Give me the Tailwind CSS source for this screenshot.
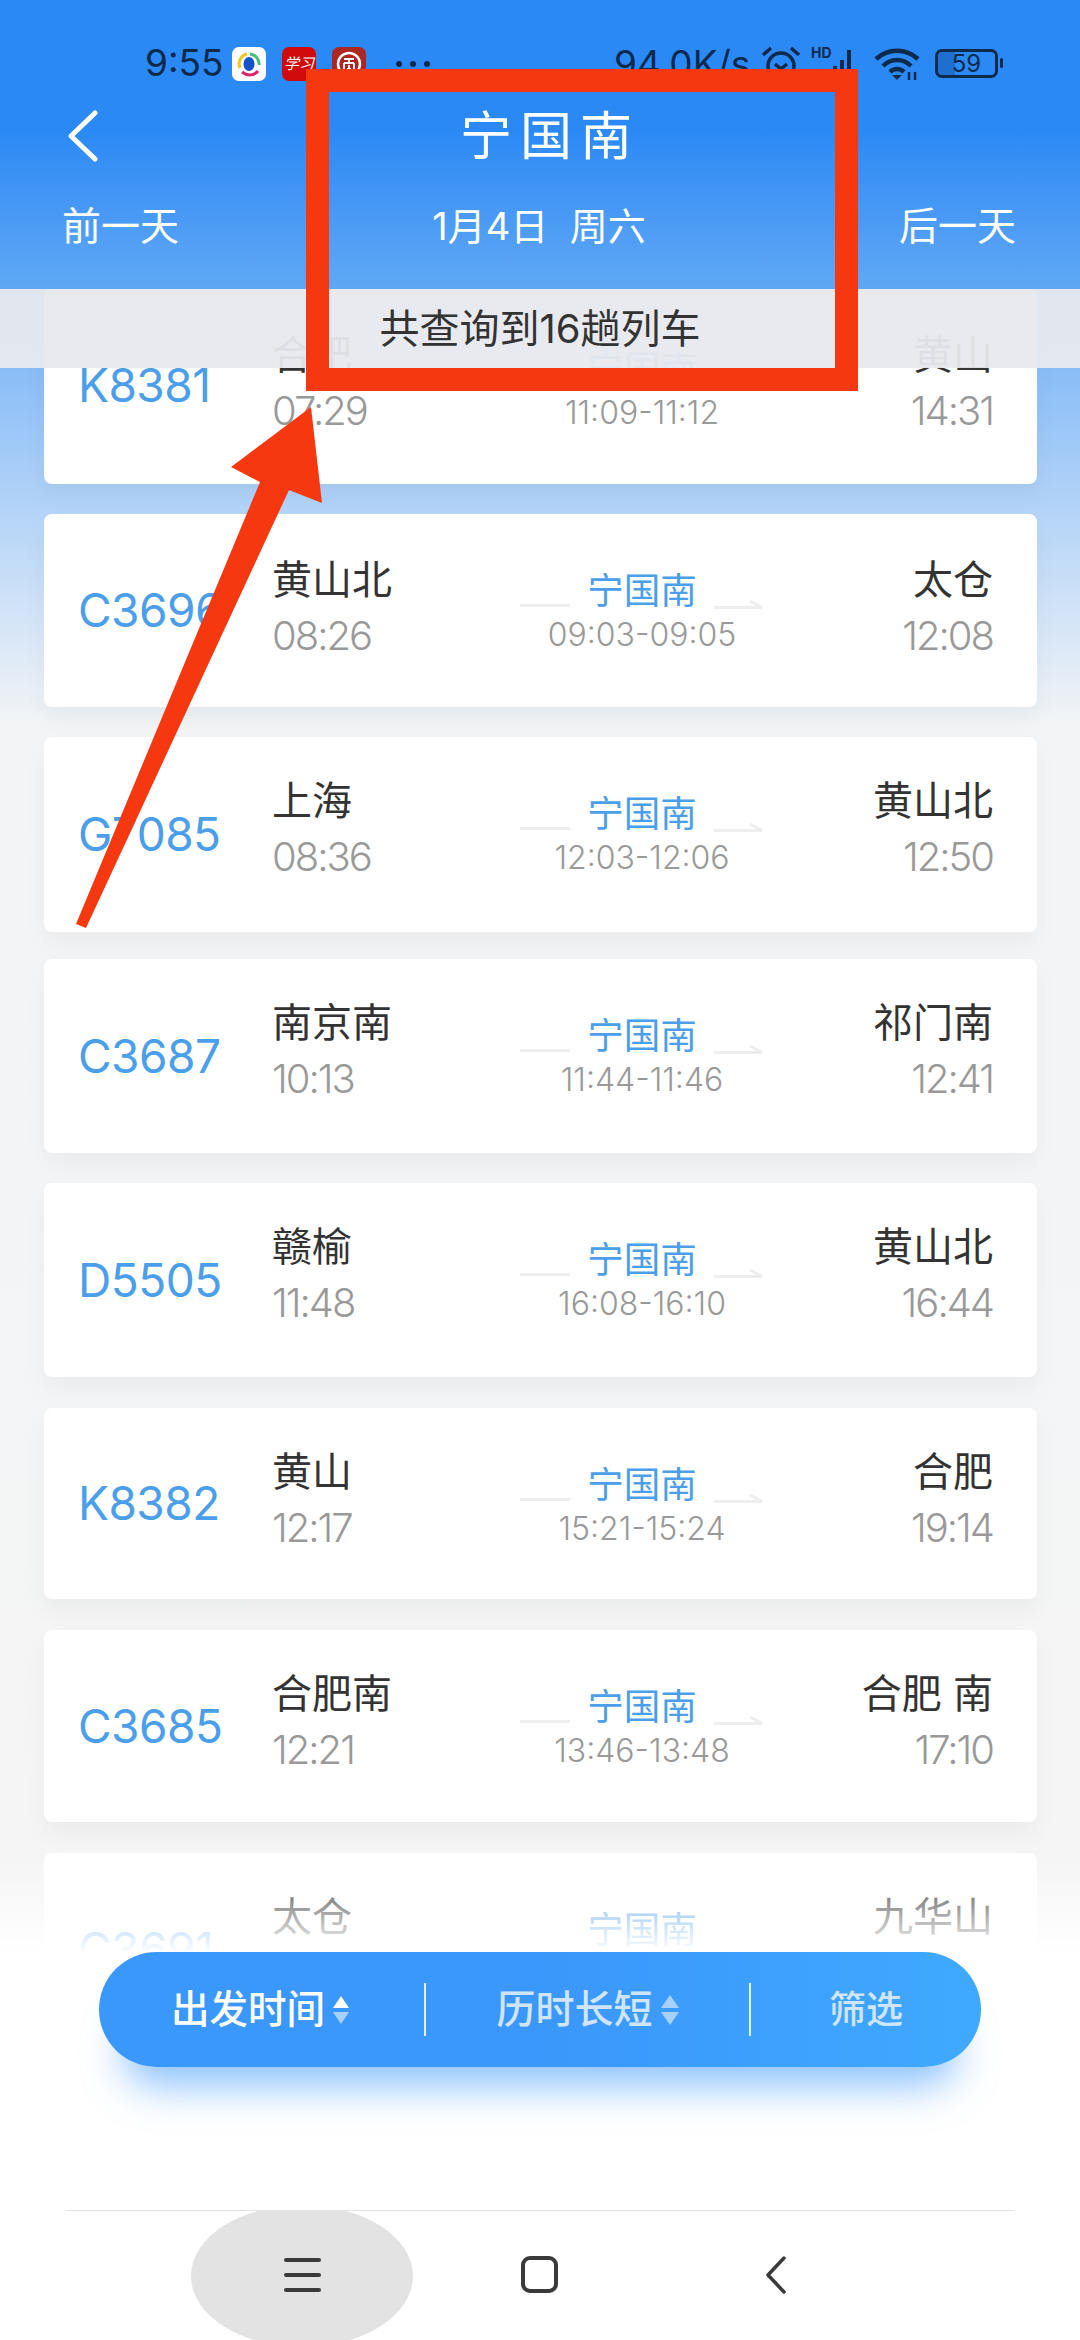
<!DOCTYPE html>
<html lang="zh-CN">

<head>
    <meta charset="UTF-8">
    <meta name="viewport" content="width=device-width, initial-scale=1.0">
    <title>宁国南</title>
    <script src="https://cdn.jsdelivr.net/npm/@tailwindcss/browser@4"></script>
</head>

<body class="font-[Inter,'Noto_Sans_CJK_SC',sans-serif] bg-white">
    <div class="relative w-[1080px] h-[2340px] overflow-hidden bg-white">

        <!-- train list -->
        <main
            class="h-[1952px] overflow-hidden pl-[44px] pr-[43px] pt-[289px] flex flex-col bg-gradient-to-b from-[#5fa7f5] from-[12%] via-[#f2f4f6] via-[37%] to-[#f5f5f5]">

            <div class="shrink-0 h-[195px] mb-[30px] flex bg-white rounded-[8px] shadow-[0_12px_24px_rgba(0,0,0,0.04)] pl-[34px] pr-[44px]">
                <div class="w-[194px] flex items-center pb-[2px] text-[46px] tracking-[-0.5px] text-[#4a9eea]">K8381</div>
                <div class="w-[248px] pt-[44px]">
                    <p class="text-[40px] leading-[44px] text-[#333]">合肥</p>
                    <p class="text-[40px] leading-[68px] tracking-[-2px] font-light text-[#999]">07:29</p>
                </div>
                <div class="w-[244px] pt-[62px]">
                    <div class="flex items-end justify-between">
                        <span class="w-[50px] h-[3px] mb-[2px] bg-[#eeeeee]"></span>
                        <span class="text-[36.5px] leading-[36px] text-[#4a9eea]">宁国南</span>
                        <svg width="50" height="10" viewBox="0 0 50 10" fill="none" stroke="#eeeeee" stroke-width="3"><path d="M0 8.5H48L36 2" /></svg>
                    </div>
                    <p class="text-[32px] leading-[52px] text-center tracking-[0px] font-light text-[#999]">11:09-11:12</p>
                </div>
                <div class="flex-1 pt-[44px] text-right">
                    <p class="text-[40px] leading-[44px] text-[#333]">黄山</p>
                    <p class="text-[40px] leading-[68px] tracking-[-2px] font-light text-[#999]">14:31</p>
                </div>
            </div>

            <div class="shrink-0 h-[193px] mb-[30px] flex bg-white rounded-[8px] shadow-[0_12px_24px_rgba(0,0,0,0.04)] pl-[34px] pr-[44px]">
                <div class="w-[194px] flex items-center text-[46px] tracking-[-0.5px] text-[#4a9eea]">C3696</div>
                <div class="w-[248px] pt-[44px]">
                    <p class="text-[40px] leading-[44px] text-[#333]">黄山北</p>
                    <p class="text-[40px] leading-[68px] tracking-[-2px] font-light text-[#999]">08:26</p>
                </div>
                <div class="w-[244px] pt-[59px]">
                    <div class="flex items-end justify-between">
                        <span class="w-[50px] h-[3px] mb-[2px] bg-[#eeeeee]"></span>
                        <span class="text-[36.5px] leading-[36px] text-[#4a9eea]">宁国南</span>
                        <svg width="50" height="10" viewBox="0 0 50 10" fill="none" stroke="#eeeeee" stroke-width="3"><path d="M0 8.5H48L36 2" /></svg>
                    </div>
                    <p class="text-[32px] leading-[52px] text-center tracking-[0px] font-light text-[#999]">09:03-09:05</p>
                </div>
                <div class="flex-1 pt-[44px] text-right">
                    <p class="text-[40px] leading-[44px] text-[#333]">太仓</p>
                    <p class="text-[40px] leading-[68px] tracking-[-2px] font-light text-[#999]">12:08</p>
                </div>
            </div>

            <div class="shrink-0 h-[195px] mb-[27px] flex bg-white rounded-[8px] shadow-[0_12px_24px_rgba(0,0,0,0.04)] pl-[34px] pr-[44px]">
                <div class="w-[194px] flex items-center text-[46px] tracking-[-0.5px] text-[#4a9eea]">G7085</div>
                <div class="w-[248px] pt-[42px]">
                    <p class="text-[40px] leading-[44px] text-[#333]">上海</p>
                    <p class="text-[40px] leading-[68px] tracking-[-2px] font-light text-[#999]">08:36</p>
                </div>
                <div class="w-[244px] pt-[59px]">
                    <div class="flex items-end justify-between">
                        <span class="w-[50px] h-[3px] mb-[2px] bg-[#eeeeee]"></span>
                        <span class="text-[36.5px] leading-[36px] text-[#4a9eea]">宁国南</span>
                        <svg width="50" height="10" viewBox="0 0 50 10" fill="none" stroke="#eeeeee" stroke-width="3"><path d="M0 8.5H48L36 2" /></svg>
                    </div>
                    <p class="text-[32px] leading-[52px] text-center tracking-[0px] font-light text-[#999]">12:03-12:06</p>
                </div>
                <div class="flex-1 pt-[42px] text-right">
                    <p class="text-[40px] leading-[44px] text-[#333]">黄山北</p>
                    <p class="text-[40px] leading-[68px] tracking-[-2px] font-light text-[#999]">12:50</p>
                </div>
            </div>

            <div class="shrink-0 h-[194px] mb-[30px] flex bg-white rounded-[8px] shadow-[0_12px_24px_rgba(0,0,0,0.04)] pl-[34px] pr-[44px]">
                <div class="w-[194px] flex items-center text-[46px] tracking-[-0.5px] text-[#4a9eea]">C3687</div>
                <div class="w-[248px] pt-[42px]">
                    <p class="text-[40px] leading-[44px] text-[#333]">南京南</p>
                    <p class="text-[40px] leading-[68px] tracking-[-2px] font-light text-[#999]">10:13</p>
                </div>
                <div class="w-[244px] pt-[59px]">
                    <div class="flex items-end justify-between">
                        <span class="w-[50px] h-[3px] mb-[2px] bg-[#eeeeee]"></span>
                        <span class="text-[36.5px] leading-[36px] text-[#4a9eea]">宁国南</span>
                        <svg width="50" height="10" viewBox="0 0 50 10" fill="none" stroke="#eeeeee" stroke-width="3"><path d="M0 8.5H48L36 2" /></svg>
                    </div>
                    <p class="text-[32px] leading-[52px] text-center tracking-[0px] font-light text-[#999]">11:44-11:46</p>
                </div>
                <div class="flex-1 pt-[42px] text-right">
                    <p class="text-[40px] leading-[44px] text-[#333]">祁门南</p>
                    <p class="text-[40px] leading-[68px] tracking-[-2px] font-light text-[#999]">12:41</p>
                </div>
            </div>

            <div class="shrink-0 h-[194px] mb-[31px] flex bg-white rounded-[8px] shadow-[0_12px_24px_rgba(0,0,0,0.04)] pl-[34px] pr-[44px]">
                <div class="w-[194px] flex items-center text-[46px] tracking-[-0.5px] text-[#4a9eea]">D5505</div>
                <div class="w-[248px] pt-[42px]">
                    <p class="text-[40px] leading-[44px] text-[#333]">赣榆</p>
                    <p class="text-[40px] leading-[68px] tracking-[-2px] font-light text-[#999]">11:48</p>
                </div>
                <div class="w-[244px] pt-[59px]">
                    <div class="flex items-end justify-between">
                        <span class="w-[50px] h-[3px] mb-[2px] bg-[#eeeeee]"></span>
                        <span class="text-[36.5px] leading-[36px] text-[#4a9eea]">宁国南</span>
                        <svg width="50" height="10" viewBox="0 0 50 10" fill="none" stroke="#eeeeee" stroke-width="3"><path d="M0 8.5H48L36 2" /></svg>
                    </div>
                    <p class="text-[32px] leading-[52px] text-center tracking-[0px] font-light text-[#999]">16:08-16:10</p>
                </div>
                <div class="flex-1 pt-[42px] text-right">
                    <p class="text-[40px] leading-[44px] text-[#333]">黄山北</p>
                    <p class="text-[40px] leading-[68px] tracking-[-2px] font-light text-[#999]">16:44</p>
                </div>
            </div>

            <div class="shrink-0 h-[191px] mb-[31px] flex bg-white rounded-[8px] shadow-[0_12px_24px_rgba(0,0,0,0.04)] pl-[34px] pr-[44px]">
                <div class="w-[194px] flex items-center text-[46px] tracking-[-0.5px] text-[#4a9eea]">K8382</div>
                <div class="w-[248px] pt-[42px]">
                    <p class="text-[40px] leading-[44px] text-[#333]">黄山</p>
                    <p class="text-[40px] leading-[68px] tracking-[-2px] font-light text-[#999]">12:17</p>
                </div>
                <div class="w-[244px] pt-[59px]">
                    <div class="flex items-end justify-between">
                        <span class="w-[50px] h-[3px] mb-[2px] bg-[#eeeeee]"></span>
                        <span class="text-[36.5px] leading-[36px] text-[#4a9eea]">宁国南</span>
                        <svg width="50" height="10" viewBox="0 0 50 10" fill="none" stroke="#eeeeee" stroke-width="3"><path d="M0 8.5H48L36 2" /></svg>
                    </div>
                    <p class="text-[32px] leading-[52px] text-center tracking-[0px] font-light text-[#999]">15:21-15:24</p>
                </div>
                <div class="flex-1 pt-[42px] text-right">
                    <p class="text-[40px] leading-[44px] text-[#333]">合肥</p>
                    <p class="text-[40px] leading-[68px] tracking-[-2px] font-light text-[#999]">19:14</p>
                </div>
            </div>

            <div class="shrink-0 h-[192px] mb-[31px] flex bg-white rounded-[8px] shadow-[0_12px_24px_rgba(0,0,0,0.04)] pl-[34px] pr-[44px]">
                <div class="w-[194px] flex items-center text-[46px] tracking-[-0.5px] text-[#4a9eea]">C3685</div>
                <div class="w-[248px] pt-[42px]">
                    <p class="text-[40px] leading-[44px] text-[#333]">合肥南</p>
                    <p class="text-[40px] leading-[68px] tracking-[-2px] font-light text-[#999]">12:21</p>
                </div>
                <div class="w-[244px] pt-[59px]">
                    <div class="flex items-end justify-between">
                        <span class="w-[50px] h-[3px] mb-[2px] bg-[#eeeeee]"></span>
                        <span class="text-[36.5px] leading-[36px] text-[#4a9eea]">宁国南</span>
                        <svg width="50" height="10" viewBox="0 0 50 10" fill="none" stroke="#eeeeee" stroke-width="3"><path d="M0 8.5H48L36 2" /></svg>
                    </div>
                    <p class="text-[32px] leading-[52px] text-center tracking-[0px] font-light text-[#999]">13:46-13:48</p>
                </div>
                <div class="flex-1 pt-[42px] text-right">
                    <p class="text-[40px] leading-[44px] text-[#333]">合肥 南</p>
                    <p class="text-[40px] leading-[68px] tracking-[-2px] font-light text-[#999]">17:10</p>
                </div>
            </div>

            <div class="shrink-0 h-[192px] flex bg-white rounded-[8px] pl-[34px] pr-[44px]">
                <div class="w-[194px] flex items-center text-[46px] tracking-[-0.5px] text-[#4a9eea]">C3691</div>
                <div class="w-[248px] pt-[42px]">
                    <p class="text-[40px] leading-[44px] text-[#333]">太仓</p>
                </div>
                <div class="w-[244px] pt-[59px] text-center">
                    <span class="text-[36.5px] leading-[36px] text-[#4a9eea]">宁国南</span>
                </div>
                <div class="flex-1 pt-[42px] text-right">
                    <p class="text-[40px] leading-[44px] text-[#333]">九华山</p>
                </div>
            </div>
        </main>

        <!-- list fades out above the sort bar -->
        <div class="absolute left-0 top-[1860px] w-full h-[93px] bg-gradient-to-b from-white/0 to-white"></div>

        <!-- header over the list -->
        <header class="absolute left-0 top-0 w-full text-white">
            <div class="h-[289px] bg-gradient-to-b from-[#2a89f5] from-[45%] to-[#60a8f5]">
                <div class="h-[92px] relative text-[#0d2a4d]">
                    <span class="absolute left-[145px] top-[40px] text-[37px] leading-[46px]">9:55</span>
                    <svg class="absolute left-[232px] top-[47px]" width="34" height="34" viewBox="0 0 34 34">
                        <rect width="34" height="34" rx="7" fill="#fff" />
                        <path d="M8 21A10 10 0 0 1 15 7" fill="none" stroke="#f2c81f" stroke-width="3" />
                        <path d="M18 7A10 10 0 0 1 27 18" fill="none" stroke="#3fc17a" stroke-width="3" />
                        <path d="M10 25C15 29 22 29 26 24" fill="none" stroke="#d9256b" stroke-width="3" />
                        <ellipse cx="17" cy="17" rx="5.5" ry="7" fill="#1453c9" />
                    </svg>
                    <div class="absolute left-[282px] top-[47px] w-[34px] h-[34px] rounded-[7px] bg-[#d00a0a] text-white text-[15px] leading-[34px] text-center font-['Liberation_Serif','Noto_Sans_CJK_SC',serif] italic whitespace-nowrap overflow-hidden">学习</div>
                    <svg class="absolute left-[332px] top-[47px]" width="34" height="34" viewBox="0 0 34 34">
                        <rect width="34" height="34" rx="7" fill="#ad2722" />
                        <circle cx="17" cy="17" r="11" fill="none" stroke="#fff" stroke-width="2.5" />
                        <path d="M12 12H22M17 12V15M12 16H22M12 16V22M22 16V22M15 22H19M17 18V22" fill="none" stroke="#fff" stroke-width="1.8" />
                    </svg>
                    <div class="absolute left-[396px] top-[61px] flex gap-[8px]">
                        <span class="w-[6px] h-[6px] rounded-full bg-[#0d2a4d]"></span>
                        <span class="w-[6px] h-[6px] rounded-full bg-[#0d2a4d]"></span>
                        <span class="w-[6px] h-[6px] rounded-full bg-[#0d2a4d]"></span>
                    </div>
                    <span class="absolute left-[614px] top-[42px] text-[37px] leading-[44px]">94.0K/s</span>
                    <svg class="absolute left-[760px] top-[44px]" width="42" height="40" viewBox="0 0 42 40" fill="none" stroke="#0d2a4d" stroke-width="3.5">
                        <circle cx="21" cy="22" r="13" />
                        <path d="M15 20L21 25L27 20M3 11L11 4M39 11L31 4" />
                    </svg>
                    <span class="absolute left-[811px] top-[46px] text-[14px] leading-[14px] font-bold">HD</span>
                    <div class="absolute left-[826px] top-[48px] h-[32px] flex items-end gap-[3px]">
                        <span class="w-[4px] h-[8px] bg-[#0d2a4d]"></span>
                        <span class="w-[4px] h-[14px] bg-[#0d2a4d]"></span>
                        <span class="w-[4px] h-[20px] bg-[#0d2a4d]"></span>
                        <span class="w-[4px] h-[30px] bg-[#0d2a4d]"></span>
                    </div>
                    <svg class="absolute left-[874px] top-[46px]" width="48" height="36" viewBox="0 0 48 36" fill="none" stroke="#0d2a4d" stroke-width="4.5">
                        <path d="M2 13C14 2 32 2 44 13M9 20C17 12 29 12 37 20M16 26C20 22 26 22 30 26" />
                        <path d="M23 34L18 29H28Z" fill="#0d2a4d" stroke="none" />
                        <path d="M35 26V34M41 26V34" stroke-width="2.5" />
                    </svg>
                    <div class="absolute left-[935px] top-[49px] w-[63px] h-[29px] border-[3px] border-[#0d2a4d] rounded-[7px] overflow-hidden flex items-center justify-center text-[24px] leading-none bg-[linear-gradient(90deg,#1f6fd0_30%,transparent_30%)]">59</div>
                    <span class="absolute left-[1000px] top-[58px] w-[3px] h-[10px] rounded-full bg-[#0d2a4d]"></span>
                </div>
                <div class="relative h-[197px]">
                    <svg class="absolute left-[66px] top-[18px]" width="34" height="52" viewBox="0 0 34 52" fill="none" stroke="#fff" stroke-width="5" stroke-linecap="round" stroke-linejoin="round">
                        <path d="M29 3L5 26L29 49" />
                    </svg>
                    <h1 class="absolute left-[460px] top-[15px] text-[52px] leading-[60px] tracking-[8px] whitespace-nowrap">宁国南</h1>
                    <div class="absolute left-0 top-[112px] w-full flex justify-between items-center pl-[62px] pr-[64px] text-[39px] leading-[44px]">
                        <span>前一天</span>
                        <span class="text-[38px]">1月4日&nbsp;&nbsp;周六</span>
                        <span>后一天</span>
                    </div>
                </div>
            </div>
            <div class="h-[79px] flex items-center justify-center bg-[#e8e9ee]/95 text-[#333] text-[40px]">共查询到16趟列车</div>
        </header>

        <!-- sort bar -->
        <div class="absolute left-[99px] top-[1952px] w-[882px] h-[115px] flex items-center rounded-full bg-gradient-to-r from-[#3a97fb] from-[50%] to-[#3fa9ff] shadow-[0_42px_40px_-24px_rgba(60,150,250,0.6)]">
            <div class="w-[325px] flex items-center pl-[72px] gap-[8px] text-[38.5px] font-medium text-white">
                <span>出发时间</span>
                <span class="flex flex-col gap-[4px]">
                    <span class="w-0 h-0 border-x-[8px] border-x-transparent border-b-[12px] border-b-white"></span>
                    <span class="w-0 h-0 border-x-[8px] border-x-transparent border-t-[12px] border-t-[#a8d0fc]"></span>
                </span>
            </div>
            <span class="w-[2px] h-[53px] bg-white/85"></span>
            <div class="w-[323px] flex items-center justify-center gap-[8px] text-[39px] font-medium text-[#cfe4fd]">
                <span>历时长短</span>
                <span class="flex flex-col gap-[4px]">
                    <span class="w-0 h-0 border-x-[9px] border-x-transparent border-b-[13px] border-b-[#a8d0fc]"></span>
                    <span class="w-0 h-0 border-x-[9px] border-x-transparent border-t-[13px] border-t-[#a8d0fc]"></span>
                </span>
            </div>
            <span class="w-[2px] h-[53px] bg-white/85"></span>
            <div class="flex-1 flex justify-center text-[37px] font-medium text-[#cfe4fd]">筛选</div>
        </div>

        <!-- system nav bar -->
        <nav class="absolute left-0 top-[2210px] w-full h-[130px] overflow-hidden">
            <div class="mx-[65px] h-px bg-[#e3e3e3]"></div>
            <div class="relative h-[129px]">
                <span class="absolute left-[191px] top-[-6px] w-[222px] h-[142px] rounded-[50%] bg-[#e3e3e3]"></span>
                <div class="absolute left-[284px] top-[47px] w-[37px] flex flex-col gap-[11px]">
                    <span class="h-[4px] rounded-full bg-[#3a3a3a]"></span>
                    <span class="h-[4px] rounded-full bg-[#3a3a3a]"></span>
                    <span class="h-[4px] rounded-full bg-[#3a3a3a]"></span>
                </div>
                <span class="absolute left-[521px] top-[45px] w-[37px] h-[37px] rounded-[9px] border-[4px] border-[#3a3a3a]"></span>
                <svg class="absolute left-[764px] top-[45px]" width="24" height="38" viewBox="0 0 24 38" fill="none" stroke="#3a3a3a" stroke-width="3.5" stroke-linecap="round" stroke-linejoin="round">
                    <path d="M20 2L4 19L20 36" />
                </svg>
            </div>
        </nav>

        <!-- red annotation on top of the screenshot -->
        <div class="absolute left-[306px] top-[69px] w-[552px] h-[322px] border-[23px] border-[#f5380f]"></div>
        <svg class="absolute left-0 top-0" width="1080" height="2340" viewBox="0 0 1080 2340">
            <polygon points="311,407 322,503 289,490 86,928 76,924 260,482 231,467" fill="#f5380f" />
        </svg>
    </div>
</body>

</html>
